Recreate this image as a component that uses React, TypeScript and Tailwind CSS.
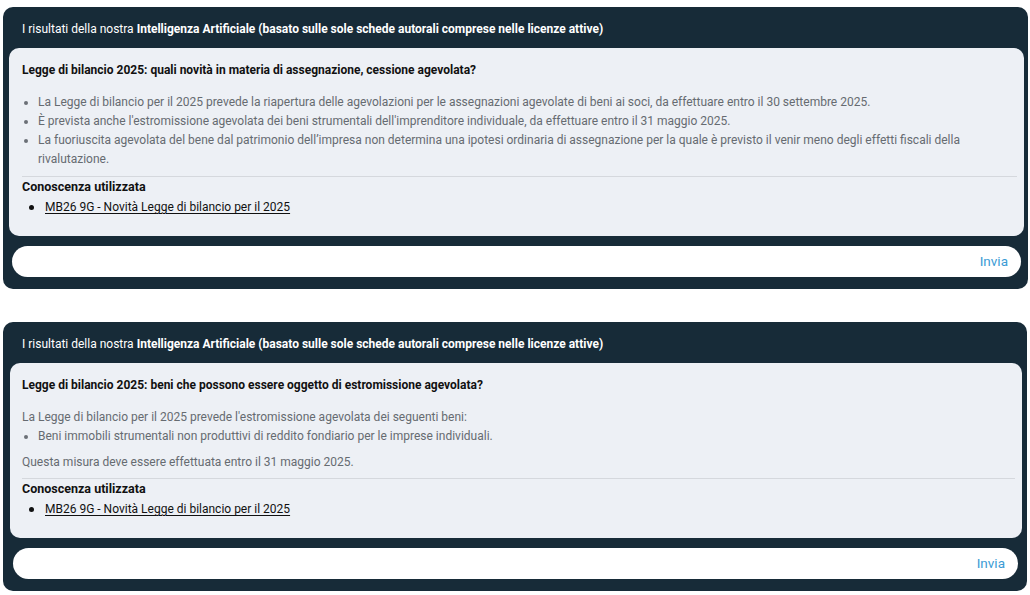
import React from "react";

type Answer = {
  question: string;
  body: React.ReactNode;
  source: string;
};

function Bullet({ children }: { children: React.ReactNode }) {
  return (
    <li className="flex">
      <span className="ml-[2px] mr-[10px] mt-[8px] h-[4px] w-[4px] shrink-0 rounded-full bg-[#6b7076]" />
      <span>{children}</span>
    </li>
  );
}

function ResultCard({ item, narrow }: { item: Answer; narrow?: boolean }) {
  return (
    <div className={narrow ? "mr-[1px] rounded-[10px] bg-[#172b38] pb-[12px]" : "rounded-[10px] bg-[#172b38] pb-[12px]"}>
      {/* Header */}
      <div className="h-[41px] px-[19px] pt-[14px] text-[12px] leading-[16px] text-white">
        I risultati della nostra{" "}
        <b className="font-bold">
          Intelligenza Artificiale (basato sulle sole schede autorali comprese nelle licenze attive)
        </b>
      </div>

      {/* Answer panel */}
      <div
        className={
          narrow
            ? "ml-[7px] mr-[5px] rounded-[10px] bg-[#edf0f5] pb-[18px] pl-[12px] pr-[7px] pt-[12px]"
            : "ml-[6px] mr-[4px] rounded-[10px] bg-[#edf0f5] pb-[18px] pl-[13px] pr-[7px] pt-[12px]"
        }
      >
        <h3 className="text-[12px] font-bold leading-[20px] text-[#111]">{item.question}</h3>
        <div className="mt-[13px] text-[12px] leading-[19px] text-[#666b71]">{item.body}</div>
        <div className="mt-[6px] border-t-[1.5px] border-[#d5d8dd]" />
        <div className="text-[12.5px] font-bold leading-[20px] text-[#111]">Conoscenza utilizzata</div>
        <div className="flex items-center pl-[7px] text-[12px] leading-[21px] text-[#111]">
          <span className="mr-[11px] h-[5px] w-[5px] rounded-full bg-[#111]" />
          <a href="#" className="underline underline-offset-2">
            {item.source}
          </a>
        </div>
      </div>

      {/* Input */}
      <div
        className={
          narrow
            ? "ml-[10px] mr-[9px] mt-[10px] flex h-[31px] items-center justify-end rounded-full bg-white pr-[13px]"
            : "ml-[9px] mr-[7px] mt-[10px] flex h-[31px] items-center justify-end rounded-full bg-white pr-[13px]"
        }
      >
        <button className="text-[13.5px] text-[#3b9bd5]">Invia</button>
      </div>
    </div>
  );
}

export default function App() {
  const answers: Answer[] = [
    {
      question: "Legge di bilancio 2025: quali novità in materia di assegnazione, cessione agevolata?",
      body: (
        <ul className="pb-[1px]">
          <Bullet>
            La Legge di bilancio per il 2025 prevede la riapertura delle agevolazioni per le assegnazioni agevolate di beni ai soci, da effettuare entro il 30 settembre 2025.
          </Bullet>
          <Bullet>
            È prevista anche l'estromissione agevolata dei beni strumentali dell'imprenditore individuale, da effettuare entro il 31 maggio 2025.
          </Bullet>
          <Bullet>
            La fuoriuscita agevolata del bene dal patrimonio dell’impresa non determina una ipotesi ordinaria di assegnazione per la quale è previsto il venir meno degli effetti fiscali della rivalutazione.
          </Bullet>
        </ul>
      ),
      source: "MB26 9G - Novità Legge di bilancio per il 2025",
    },
    {
      question: "Legge di bilancio 2025: beni che possono essere oggetto di estromissione agevolata?",
      body: (
        <>
          <p>La Legge di bilancio per il 2025 prevede l'estromissione agevolata dei seguenti beni:</p>
          <ul>
            <Bullet>Beni immobili strumentali non produttivi di reddito fondiario per le imprese individuali.</Bullet>
          </ul>
          <p className="mt-[7px]">Questa misura deve essere effettuata entro il 31 maggio 2025.</p>
        </>
      ),
      source: "MB26 9G - Novità Legge di bilancio per il 2025",
    },
  ];

  return (
    <div
      className="min-h-screen bg-white pl-[3px] pr-[2px] pt-[7px]"
      style={{ fontFamily: "Roboto, 'Noto Sans', sans-serif" }}
    >
      <div className="flex flex-col gap-[33px]">
        {answers.map((a, i) => (
          <ResultCard key={i} item={a} narrow={i === 1} />
        ))}
      </div>
    </div>
  );
}
